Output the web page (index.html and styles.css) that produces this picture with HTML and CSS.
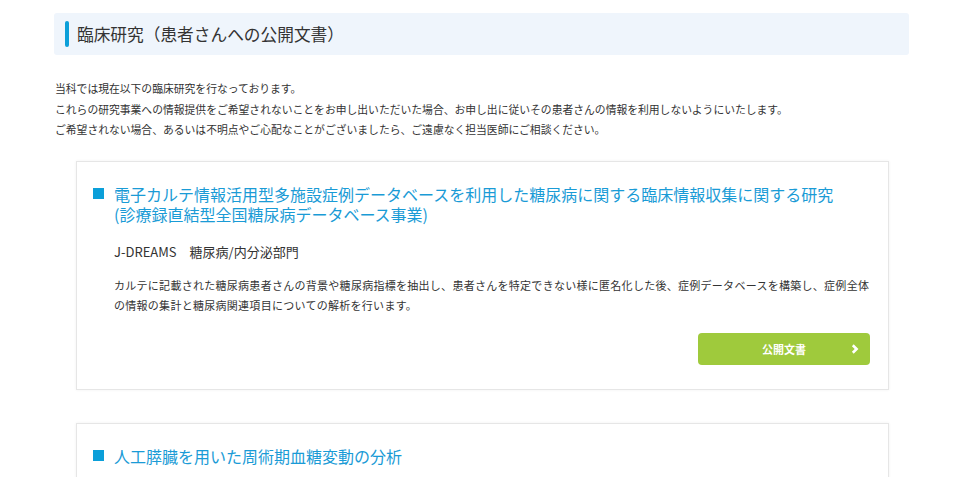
FILE: index.html
```html
<!DOCTYPE html>
<html lang="ja">
<head>
  <meta charset="UTF-8">
  <title>臨床研究（患者さんへの公開文書）</title>
  <link rel="stylesheet" href="styles.css">
</head>
<body>
  <div class="page">
    <h1 class="page-title"><span class="bar"></span>臨床研究（患者さんへの公開文書）</h1>

    <p class="intro">
      当科では現在以下の臨床研究を行なっております。<br>
      これらの研究事業への情報提供をご希望されないことをお申し出いただいた場合、お申し出に従いその患者さんの情報を利用しないようにいたします。<br>
      ご希望されない場合、あるいは不明点やご心配なことがございましたら、ご遠慮なく担当医師にご相談ください。
    </p>

    <div class="card">
      <h2 class="card-title"><span class="sq"></span><span>電子カルテ情報活用型多施設症例データベースを利用した糖尿病に関する臨床情報収集に関する研究<br>(診療録直結型全国糖尿病データベース事業)</span></h2>
      <p class="dept">J-DREAMS　糖尿病/内分泌部門</p>
      <p class="desc">カルテに記載された糖尿病患者さんの背景や糖尿病指標を抽出し、患者さんを特定できない様に匿名化した後、症例データベースを構築し、症例全体の情報の集計と糖尿病関連項目についての解析を行います。</p>
      <div class="actions">
        <a href="#" class="btn">公開文書<span class="chev">
          <svg width="8" height="10" viewBox="0 0 8 10"><path d="M1.8 1.3 L5.6 5 L1.8 8.7" fill="none" stroke="#fff" stroke-width="2.6"/></svg>
        </span></a>
      </div>
    </div>

    <div class="card">
      <h2 class="card-title"><span class="sq"></span><span>人工膵臓を用いた周術期血糖変動の分析</span></h2>
      <p class="dept">人工膵臓　糖尿病/内分泌部門</p>
    </div>
  </div>
</body>
</html>
```

FILE: styles.css
```css
body {
  margin: 0;
  background: #fff;
  color: #333;
  font-family: "Noto Sans CJK JP", "Noto Sans", sans-serif;
}
.page {
  width: 855px;
  margin-left: 54px;
  padding-top: 13px;
}
.page-title {
  display: flex;
  align-items: center;
  height: 42px;
  margin: 0;
  padding-left: 11px;
  background: #eff5fc;
  border-radius: 3px;
  font-size: 16.7px;
  font-weight: normal;
  color: #333;
}
.page-title .bar {
  width: 4px;
  height: 26px;
  background: #0b9fd9;
  border-radius: 2px;
  margin-right: 8px;
}
.intro {
  margin: 23px 0 21px 1px;
  font-size: 10.8px;
  line-height: 20.5px;
}
.card {
  width: 813px;
  margin: 0 0 33px 22px;
  border: 1px solid #e6e6e6;
  box-shadow: 0 0 3px rgba(0,0,0,0.06);
  padding: 22px 18px 24px 16px;
  box-sizing: border-box;
}
.card-title {
  display: flex;
  margin: 0;
  font-size: 16px;
  font-weight: normal;
  line-height: 20px;
  color: #1a9bd6;
}
.card-title .sq {
  flex: none;
  width: 11px;
  height: 11px;
  background: #0b9fd9;
  margin: 4px 10px 0 0;
}
.dept {
  margin: 18px 0 0 21px;
  font-size: 13px;
  line-height: 20px;
}
.desc {
  margin: 13px 0 0 21px;
  font-size: 11px;
  letter-spacing: 0.28px;
  line-height: 20px;
}
.actions {
  display: flex;
  justify-content: flex-end;
  margin-top: 18px;
}
.btn {
  position: relative;
  display: flex;
  align-items: center;
  justify-content: center;
  width: 172px;
  height: 32px;
  background: #9fca3c;
  border-radius: 4px;
  color: #fff;
  font-size: 11px;
  font-weight: bold;
  text-decoration: none;
}
.chev {
  position: absolute;
  right: 11px;
  top: 11px;
  line-height: 0;
}
```
